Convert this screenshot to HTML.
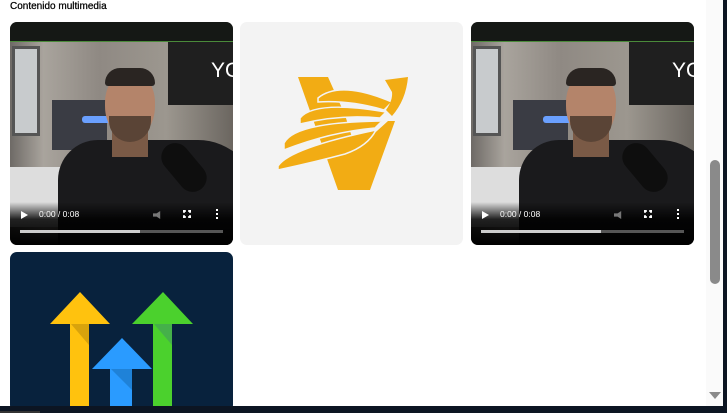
<!DOCTYPE html>
<html><head><style>
*{margin:0;padding:0;box-sizing:border-box}
body{width:727px;height:413px;background:#fff;position:relative;overflow:hidden;font-family:"Liberation Sans",sans-serif}
.t{position:absolute;left:10px;top:0;font-size:10px;color:#000;line-height:14px;-webkit-text-stroke:0.25px #000}
.tile{position:absolute;width:223px;height:223px;border-radius:7px;overflow:hidden}
.vid{background:#8a8580}
.vid .bg{position:absolute;left:0;top:20px;width:223px;height:203px;background:linear-gradient(90deg,#6e6a66 0,#a9a49d 15%,#8f8983 40%,#9c978f 70%,#6b6660 100%)}
.vid .top{position:absolute;left:0;top:0;width:223px;height:20px;background:#151815;border-bottom:1px solid #4a8a3a}
.vid .win{position:absolute;left:2px;top:24px;width:28px;height:90px;background:#c8cbcd;border:3px solid #555}
.vid .mon{position:absolute;left:42px;top:78px;width:55px;height:50px;background:#3a3c44}
.vid .led{position:absolute;left:72px;top:94px;width:40px;height:7px;background:#6aa0ff;border-radius:3px}
.vid .desk{position:absolute;left:0;top:145px;width:60px;height:60px;background:#ddd}
.vid .box{position:absolute;left:158px;top:15px;width:70px;height:68px;background:#1f1f1f;color:#fff;font-size:21px;padding:22px 0 0 43px}
.vid .body{position:absolute;left:48px;top:118px;width:200px;height:120px;background:#1a1a1c;border-radius:40px 60px 0 0}
.vid .neck{position:absolute;left:102px;top:100px;width:36px;height:35px;background:#7a5a46}
.vid .face{position:absolute;left:95px;top:50px;width:50px;height:68px;background:#b4846a;border-radius:45% 45% 50% 50%}
.vid .hair{position:absolute;left:95px;top:46px;width:50px;height:18px;background:#2a2522;border-radius:25px 25px 5px 5px}
.vid .beard{position:absolute;left:99px;top:94px;width:42px;height:26px;background:#5a4436;border-radius:0 0 22px 22px}
.vid .mic{position:absolute;left:160px;top:118px;width:28px;height:55px;background:#0e0e0e;border-radius:14px;transform:rotate(-40deg)}
.vid .ctl{position:absolute;left:0;top:180px;width:223px;height:43px;background:linear-gradient(rgba(0,0,0,0),rgba(0,0,0,.85) 40%,#000)}
.vid .play{position:absolute;left:11px;top:189px;width:0;height:0;border-left:7px solid #fff;border-top:4px solid transparent;border-bottom:4px solid transparent}
.vid .time{position:absolute;left:29px;top:187px;color:#fff;font-size:8.5px}
.vid .prog{position:absolute;left:10px;top:208px;width:203px;height:3px;background:#555}
.vid .prog i{display:block;width:120px;height:3px;background:#ccc}
.vid .fs{position:absolute;left:173px;top:188px;width:8px;height:8px;border:2px solid #fff;clip-path:polygon(0 0,35% 0,35% 100%,65% 100%,65% 0,100% 0,100% 35%,0 35%,0 65%,100% 65%,100% 100%,0 100%)}
.vid .dots{position:absolute;left:206px;top:187px;width:2px;height:10px;background:repeating-linear-gradient(#fff 0 2px,transparent 2px 4px)}
.vid .vol{position:absolute;left:143px;top:189px;width:9px;height:8px;background:#777;clip-path:polygon(0 30%,40% 30%,80% 0,80% 100%,40% 70%,0 70%)}
</style></head><body>
<div class="t">Contenido multimedia</div>

<div class="tile vid" style="left:10px;top:22px">
<div class="bg"></div><div class="win"></div><div class="mon"></div><div class="led"></div><div class="desk"></div>
<div class="box">YO</div><div class="top"></div>
<div class="body"></div><div class="neck"></div><div class="face"></div><div class="hair"></div><div class="beard"></div><div class="mic"></div>
<div class="ctl"></div><div class="play"></div><div class="time">0:00 / 0:08</div><div class="vol"></div><div class="fs"></div><div class="dots"></div>
<div class="prog"><i></i></div>
</div>

<div class="tile" style="left:240px;top:22px;background:#f3f3f3">
<svg width="223" height="223" viewBox="240 22 223 223">
<path d="M298 77 L328 77 L345 115 L356 150 L388 121 L395 121 L370 190 L338 190 Z" fill="#f2ac14"/>
<g fill="#f2ac14" stroke="#f3f3f3" stroke-width="1.5">
<path d="M318 98 Q340 80 392 102 L384 110 Q350 100 318 102 Z"/>
<path d="M300 118 Q315 100 386 112 L380 118 Q340 114 300 124 Z"/>
<path d="M284 143 Q295 122 382 121 L375 128 Q330 132 284 150 Z"/>
<path d="M278 166 Q290 148 376 130 Q368 146 345 154 Q315 162 278 170 Z"/>
</g>
<path d="M385 80 L408 77 Q406 100 392 116 L386 110 Q393 100 392 92 Z" fill="#f2ac14"/>
</svg>
</div>

<div class="tile vid" style="left:471px;top:22px">
<div class="bg"></div><div class="win"></div><div class="mon"></div><div class="led"></div><div class="desk"></div>
<div class="box">YO</div><div class="top"></div>
<div class="body"></div><div class="neck"></div><div class="face"></div><div class="hair"></div><div class="beard"></div><div class="mic"></div>
<div class="ctl"></div><div class="play"></div><div class="time">0:00 / 0:08</div><div class="vol"></div><div class="fs"></div><div class="dots"></div>
<div class="prog"><i></i></div>
</div>

<div class="tile" style="left:10px;top:252px;height:160px;background:#08223d">
<svg width="223" height="160" viewBox="10 252 223 160">
<rect x="70" y="323" width="19" height="90" fill="#ffc20e"/>
<path d="M50 324 L80 292 L110 324Z" fill="#ffc20e"/>
<path d="M71 324 L89 324 L89 345Z" fill="#d9a30c"/>
<rect x="153" y="323" width="19" height="90" fill="#4bd12d"/>
<path d="M132 324 L163 292 L193 324Z" fill="#4bd12d"/>
<path d="M154 324 L172 324 L172 345Z" fill="#45b04a"/>
<rect x="110" y="368" width="22" height="45" fill="#2a9bff"/>
<path d="M92 369 L122 338 L152 369Z" fill="#2a9bff"/>
<path d="M111 369 L132 369 L132 390Z" fill="#1f82d8"/>
</svg>
</div>

<div style="position:absolute;left:706px;top:0;width:17px;height:406px;background:#fafafa"></div>
<div style="position:absolute;left:710px;top:160px;width:10px;height:124px;background:#8a8a8a;border-radius:5px"></div>
<div style="position:absolute;left:709px;top:392px;border-left:6px solid transparent;border-right:6px solid transparent;border-top:7px solid #8a8a8a"></div>
<div style="position:absolute;left:723px;top:0;width:4px;height:413px;background:#0c1522"></div>
<div style="position:absolute;left:0;top:406px;width:727px;height:7px;background:#0c1522"></div>
<div style="position:absolute;left:0;top:411px;width:40px;height:2px;background:#333"></div>
</body></html>
